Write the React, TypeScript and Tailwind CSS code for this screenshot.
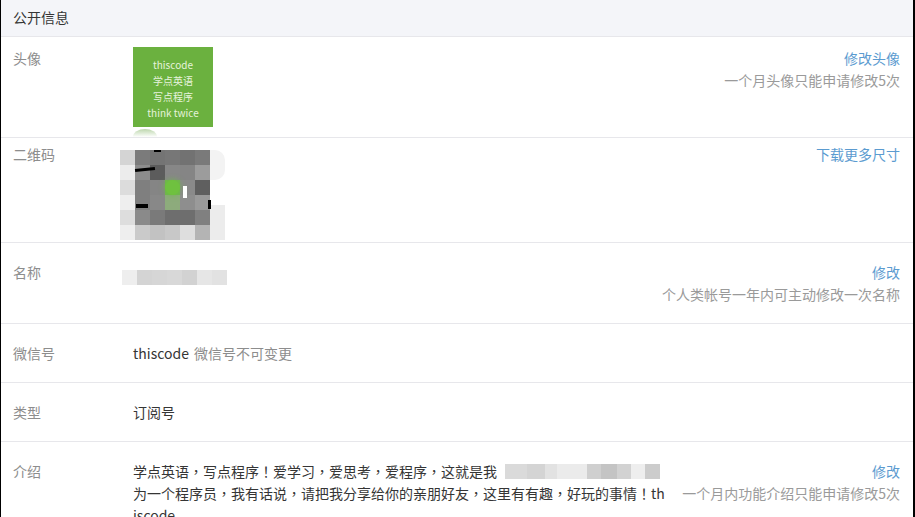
const QR_CELLS = [
  'bg-[#d4d4d4]', 'bg-[#7b7b7b]', 'bg-[#747474]', 'bg-[#777777]', 'bg-[#727272]', 'bg-[#7a7a7a]',
  'bg-[#ececec]', 'bg-[#8c8c8c]', 'bg-[#5c5c5c]', 'bg-[#878787]', 'bg-[#858585]', 'bg-[#9c9c9c]',
  'bg-[#dcdcdc]', 'bg-[#7f7f7f]', 'bg-[#858585]', 'bg-[#6fb84a]', 'bg-[#8a8a8a]', 'bg-[#5f5f5f]',
  'bg-[#eeeeee]', 'bg-[#7f7f7f]', 'bg-[#888888]', 'bg-[#8dab7c]', 'bg-[#8e8e8e]', 'bg-[#9a9a9a]',
  'bg-[#dddddd]', 'bg-[#8a8a8a]', 'bg-[#7a7a7a]', 'bg-[#6e6e6e]', 'bg-[#6e6e6e]', 'bg-[#808080]',
  'bg-[#eeeeee]', 'bg-[#cacaca]', 'bg-[#c2c2c2]', 'bg-[#c8c8c8]', 'bg-[#dedede]', 'bg-[#b4b4b4]',
]

const NAME_CELLS = ['bg-[#eeeeee]', 'bg-[#d4d4d4]', 'bg-[#d6d6d6]', 'bg-[#d8d8d8]', 'bg-[#d2d2d2]', 'bg-[#e6e6e6]', 'bg-[#e2e2e2]']

const INTRO_CELLS = [
  'w-[22px] bg-[#dadada]', 'w-[18px] bg-[#d4d4d4]', 'w-[12px] bg-[#e2e2e2]', 'w-[30px] bg-[#ebebeb]',
  'w-[14px] bg-[#cfcfcf]', 'w-[16px] bg-[#c4c4c4]', 'w-[14px] bg-[#d2d2d2]', 'w-[14px] bg-[#eeeeee]', 'w-[15px] bg-[#cccccc]',
]

// the reference centres its full-width punctuation, which the TC cut of the font does
function Punctuated({ text }: { text: string }) {
  return (
    <>
      {text.split(/([，！])/).map((part, i) =>
        i % 2 ? (
          <span key={i} className="font-['Noto_Sans_CJK_TC']">
            {part}
          </span>
        ) : (
          part
        ),
      )}
    </>
  )
}

function Row({
  label,
  labelTop = 'pt-[19px]',
  className,
  children,
  aside,
}: {
  label: string
  labelTop?: string
  className: string
  children?: React.ReactNode
  aside?: React.ReactNode
}) {
  return (
    <div className={`flex shrink-0 border-b border-[#e7e7eb] pl-[12px] pr-[13px] ${className}`}>
      <div className={`w-[120px] shrink-0 leading-5 text-[#8d8d8d] ${labelTop}`}>{label}</div>
      <div className="min-w-0 flex-1">{children}</div>
      {aside && <div className="shrink-0 text-right leading-[22px] text-[#9a9a9a]">{aside}</div>}
    </div>
  )
}

export default function App() {
  return (
    <div className="flex h-[517px] w-[915px] flex-col overflow-hidden border-l border-r-2 border-l-black border-r-black bg-white font-['Noto_Sans_CJK_SC','Liberation_Sans',sans-serif] text-sm text-[#353535]">
      <div className="flex h-[37px] shrink-0 items-center border-b border-[#e7e7eb] bg-[#f4f5f9] pb-[3px] pl-[12px]">公开信息</div>

      <Row
        label="头像"
        labelTop="pt-[11px]"
        className="h-[101px]"
        aside={
          <div className="pt-[10px]">
            <div className="text-[#5b9bd0]">修改头像</div>
            <div>一个月头像只能申请修改5次</div>
          </div>
        }
      >
        <div className="relative pt-[10px]">
          <div className="flex h-20 w-20 flex-col items-center justify-center bg-[#6bb13f] pt-[3px] text-[10px] leading-[16px] text-[#e6f3dc]">
            <span>thiscode</span>
            <span>学点英语</span>
            <span>写点程序</span>
            <span>think twice</span>
          </div>
          <div className="absolute left-0 top-[92px] h-2 w-6 rounded-[50%_50%_0_0/100%_100%_0_0] bg-linear-to-b from-[#bcd6ac] to-white" />
        </div>
      </Row>

      <Row
        label="二维码"
        labelTop="pt-[6px]"
        className="h-[105px]"
        aside={<div className="pt-[5px] text-[#5b9bd0]">下载更多尺寸</div>}
      >
        <div className="relative -ml-[13px] mt-3 flex w-[105px]">
          <div className="grid w-[90px] grid-cols-6">
            {QR_CELLS.map((cell, i) => (
              <div key={i} className={`h-[15px] ${cell}`} />
            ))}
          </div>
          <div className="flex w-[15px] flex-col">
            <div className="h-[30px] rounded-r-[10px] bg-[#f3f3f3]" />
            <div className="h-[25px]" />
            <div className="h-[35px] bg-[#ececec]" />
          </div>
          <div className="absolute left-[15px] top-[18px] h-[3px] w-5 -rotate-6 bg-black" />
          <div className="absolute left-[16px] top-[54px] h-1 w-3 bg-black" />
          <div className="absolute left-[45px] top-[30px] h-[15px] w-[15px] rounded-full bg-[#6fc13f] shadow-[0_0_6px_#6fb84a]" />
          <div className="absolute left-[63px] top-[36px] h-[12px] w-[4px] bg-white" />
          <div className="absolute left-[88px] top-[50px] h-[9px] w-[3px] bg-black" />
          <div className="absolute left-[34px] top-0 h-[2px] w-[7px] bg-black" />
        </div>
      </Row>

      <Row
        label="名称"
        className="h-[81px]"
        aside={
          <div className="pt-[18px]">
            <div className="text-[#5b9bd0]">修改</div>
            <div>个人类帐号一年内可主动修改一次名称</div>
          </div>
        }
      >
        <div className="-ml-[11px] mt-[27px] flex h-[15px]">
          {NAME_CELLS.map((cell, i) => (
            <div key={i} className={`w-[15px] ${cell}`} />
          ))}
        </div>
      </Row>

      <Row label="微信号" className="h-[59px]">
        <div className="pt-[19px] leading-5">
          thiscode <span className="ml-[2px] text-[#8d8d8d]">微信号不可变更</span>
        </div>
      </Row>

      <Row label="类型" className="h-[59px]">
        <div className="pt-[19px] leading-5">订阅号</div>
      </Row>

      <Row
        label="介绍"
        className="flex-1 border-b-0"
        aside={
          <div className="pt-[18px]">
            <div className="text-[#5b9bd0]">修改</div>
            <div>一个月内功能介绍只能申请修改5次</div>
          </div>
        }
      >
        <div className="w-[534px] break-all pt-[18px] leading-[22px]">
          <Punctuated text="学点英语，写点程序！爱学习，爱思考，爱程序，这就是我" />
          <span className="ml-2 inline-flex h-[15px] w-[155px] align-[-2px]">
            {INTRO_CELLS.map((cell, i) => (
              <span key={i} className={`h-full ${cell}`} />
            ))}
          </span>
          <Punctuated text="为一个程序员，我有话说，请把我分享给你的亲朋好友，这里有有趣，好玩的事情！thiscode" />
        </div>
      </Row>
    </div>
  )
}
